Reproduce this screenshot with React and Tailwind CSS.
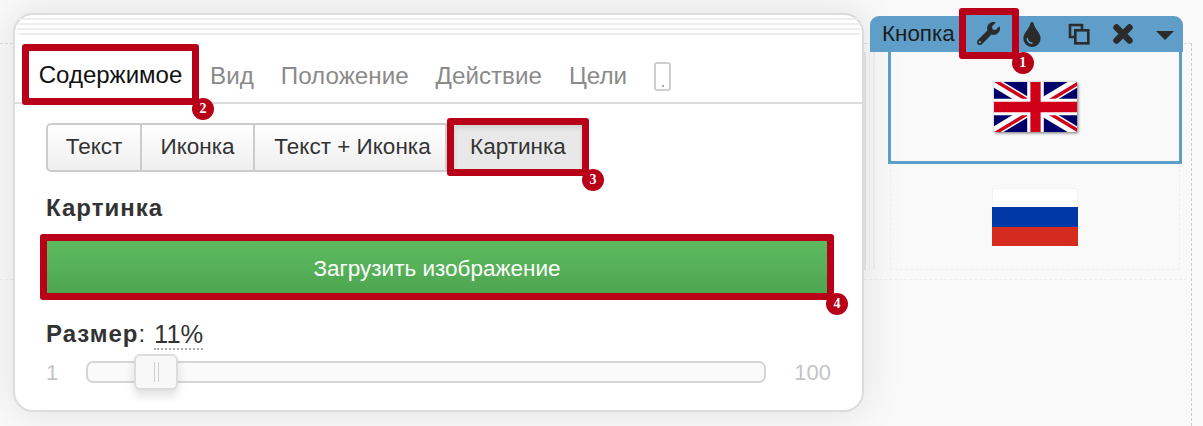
import { FaWrench, FaTint } from 'react-icons/fa';

const SANS = { fontFamily: '"Liberation Sans", Arial, sans-serif' };

function Badge({ n, className }) {
  return (
    <span
      className={`absolute z-30 flex h-[22px] w-[22px] items-center justify-center rounded-full bg-[#b80018] font-['Liberation_Serif',serif] text-[14px] font-bold leading-none text-white ${className}`}
    >
      {n}
    </span>
  );
}

function UkFlag() {
  return (
    <svg viewBox="0 0 60 36" preserveAspectRatio="none" className="h-[50px] w-[83px] shadow-[1px_1px_3px_rgba(0,0,0,0.55)]">
      <rect width="60" height="36" fill="#00006a" />
      <path d="M0 0L60 36M60 0L0 36" stroke="#fff" strokeWidth="7" />
      <path d="M0 0L30 18M60 36L30 18" stroke="#cf0018" strokeWidth="2.4" transform="translate(0.9 -0.9)" />
      <path d="M60 0L30 18M0 36L30 18" stroke="#cf0018" strokeWidth="2.4" transform="translate(0.9 0.9)" />
      <path d="M30 0V36M0 18H60" stroke="#fff" strokeWidth="12" />
      <path d="M30 0V36M0 18H60" stroke="#cf0018" strokeWidth="7.4" />
    </svg>
  );
}

function RuFlag() {
  return (
    <div className="flex h-[58px] w-[86px] flex-col">
      <div className="h-[19px] border border-b-0 border-[#f3f3f3] bg-white" />
      <div className="h-[20px] bg-[#0039a6]" />
      <div className="h-[19px] bg-[#d52b1e]" />
    </div>
  );
}

function CloneIcon() {
  return (
    <svg viewBox="0 0 22 22" className="h-[22px] w-[22px]" fill="none" stroke="#2b2b2b" strokeWidth="2.6">
      <path d="M14 7V2H2V14H7" />
      <rect x="7.3" y="7.3" width="13" height="13" />
    </svg>
  );
}

function CrossIcon() {
  return (
    <svg viewBox="0 0 22 22" className="h-[22px] w-[22px]" fill="none" stroke="#2b2b2b" strokeWidth="6.4" strokeLinecap="round">
      <path d="M4.5 4.5L17.5 17.5M17.5 4.5L4.5 17.5" />
    </svg>
  );
}

function Tabs() {
  const tabs = ['Вид', 'Положение', 'Действие', 'Цели'];
  return (
    <div className="mt-[9px] flex h-[60px] items-start border-b-2 border-[#dcdcdc] pl-[7px] text-[24px]">
      <div className="relative z-10 flex h-[61px] w-[177px] shrink-0 items-center justify-center rounded-[3px] border-[7px] border-[#b80018] text-[#111]">
        Содержимое
        <Badge n="2" className="-bottom-[22px] -right-[22px]" />
      </div>
      <div className="ml-[11px] flex h-[58px] items-center gap-[27px] pt-[6px] text-[24.2px] text-[#8a8a8a]">
        {tabs.map((t) => (
          <span key={t}>{t}</span>
        ))}
        <span className="flex h-[29px] w-[17px] items-end justify-center rounded-[3px] border-2 border-[#cfcfcf] pb-[2px]">
          <span className="h-[2px] w-[2px] bg-[#aaa]" />
        </span>
      </div>
    </div>
  );
}

function TypeButtons() {
  const cls =
    'flex h-[49px] items-center justify-center border-y-2 border-r-2 border-[#cccccc] bg-gradient-to-b from-white to-[#efefef] text-[22.5px] text-[#333]';
  return (
    <div className="ml-[31px] mt-[14px] flex h-[58px] items-center">
      <div className={`${cls} w-[96px] rounded-l-[5px] border-l-2`}>Текст</div>
      <div className={`${cls} w-[113px]`}>Иконка</div>
      <div className={`${cls} w-[192px] pl-[5px]`}>Текст + Иконка</div>
      <div className="relative flex h-[58px] w-[142px] items-center justify-center rounded-[3px] border-[7px] border-[#b80018] bg-[#e8e8e8] text-[22.5px] text-[#333] shadow-[inset_0_3px_5px_rgba(0,0,0,0.1)]">
        Картинка
        <Badge n="3" className="-bottom-[22px] -right-[22px]" />
      </div>
    </div>
  );
}

function Slider() {
  return (
    <div className="ml-[31px] mt-[7px] flex h-[36px] w-[785px] items-center text-[22px] text-[#c4c4c4]">
      <span className="w-[40px]">1</span>
      <div className="relative h-[22px] w-[680px] rounded-[7px] border-2 border-[#d6d6d6] bg-[#fafafa]">
        <div className="absolute -top-[9px] left-[46px] flex h-[36px] w-[44px] items-center justify-center gap-[3px] rounded-[6px] border-2 border-[#dcdcdc] bg-[#f8f8f8] shadow-[0_6px_10px_rgba(0,0,0,0.12)]">
          <span className="h-[20px] w-px bg-[#d0d0d0]" />
          <span className="h-[20px] w-px bg-[#d0d0d0]" />
        </div>
      </div>
      <span className="ml-auto">100</span>
    </div>
  );
}

function Panel() {
  return (
    <div className="relative z-10 ml-[13px] mt-[13px] h-[399px] w-[851px] shrink-0 rounded-[20px] border-2 border-[#dcdcdc] bg-white pt-[3px] shadow-[0_0_40px_rgba(0,0,0,0.1)]">
      <div className="mx-[2px] flex flex-col gap-[3px]">
        <div className="h-[2px] bg-[#eeeeee]" />
        <div className="h-[2px] bg-[#eeeeee]" />
        <div className="h-[2px] bg-[#eeeeee]" />
        <div className="h-[2px] bg-[#eeeeee]" />
      </div>
      <Tabs />
      <TypeButtons />
      <div className="ml-[31px] mt-[19px] text-[24px] font-bold leading-[26px] tracking-[1px] text-[#333]">Картинка</div>
      <div className="relative ml-[25px] mt-[13px] flex h-[66px] w-[794px] items-center justify-center rounded-[3px] border-[7px] border-[#b80018] bg-gradient-to-b from-[#5dbb5f] to-[#4ea650] pt-[3px] text-[22.5px] text-white">
        Загрузить изображение
        <Badge n="4" className="-bottom-[22px] -right-[21px]" />
      </div>
      <div className="ml-[31px] mt-[21px] flex h-[26px] items-center text-[24px] text-[#333]">
        <span className="font-bold tracking-[1px]">Размер</span>
        <span>:</span>
        <span className="ml-[9px] mt-[2px] border-b-2 border-dotted border-[#aaaaaa] text-[25.5px] leading-[28px]">11%</span>
      </div>
      <Slider />
    </div>
  );
}

function Sidebar() {
  return (
    <div className="relative z-20 mt-[16px] w-[330px] shrink-0">
      <div className="ml-[6px] flex h-[36px] w-[313px] items-center rounded-t-[9px] bg-[#5f9ec9] pl-[12px] text-[22.4px] text-[#1c1c1c]">
        <span>Кнопка</span>
        <div className="relative z-10 -mt-[8px] ml-[4px] flex h-[51px] w-[60px] shrink-0 items-center justify-center self-start rounded-[3px] border-[7px] border-[#b80018] bg-[#5f9ec9]">
          <FaWrench className="h-[23px] w-[23px] text-[#2b2b2b]" />
          <Badge n="1" className="-bottom-[22px] -right-[22px]" />
        </div>
        <FaTint className="ml-[1px] h-[25px] w-[24px] text-[#2b2b2b]" />
        <div className="ml-[24px]">
          <CloneIcon />
        </div>
        <div className="ml-[22px]">
          <CrossIcon />
        </div>
        <span className="ml-[22px] mt-[2px] h-0 w-0 border-x-[9px] border-t-[9px] border-x-transparent border-t-[#2b2b2b]" />
      </div>
      <div className="flex">
        <div className="flex h-[218px] w-[11px] gap-[3px]">
          <div className="w-[2px] bg-[#dddddd]" />
          <div className="w-[2px] bg-[#e8e8e8]" />
          <div className="w-[2px] bg-[#e8e8e8]" />
        </div>
        <div className="ml-[13px] w-[294px]">
          <div className="flex h-[112px] items-center justify-center border-x-[3px] border-b-[3px] border-[#5f9ec9]">
            <UkFlag />
          </div>
          <div className="mx-[2px] flex h-[106px] items-center justify-center border-x border-b border-dashed border-[#eeeeee]">
            <RuFlag />
          </div>
        </div>
      </div>
    </div>
  );
}

export default function App() {
  return (
    <div className="relative flex h-[426px] w-[1203px] items-start overflow-hidden bg-[#f9f9f9]" style={SANS}>
      {/* dashed guides of the page canvas behind the panel */}
      <div className="absolute left-0 right-[11px] top-[43px] border-t border-dashed border-[#dddddd]" />
      <div className="absolute left-0 right-[11px] top-[279px] border-t border-dashed border-[#eeeeee]" />
      <div className="absolute bottom-0 right-[11px] top-[43px] border-l border-dashed border-[#cccccc]" />
      <Panel />
      <Sidebar />
    </div>
  );
}
